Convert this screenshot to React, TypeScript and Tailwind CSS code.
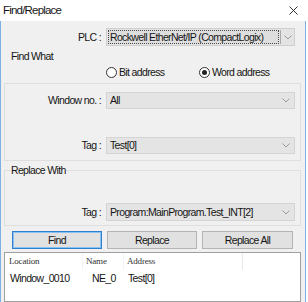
import React from "react";

function Chevron() {
  return (
    <svg width="8" height="5" viewBox="0 0 8 5" className="shrink-0">
      <polyline points="0.5,0.5 4,4 7.5,0.5" fill="none" stroke="#9a9a9a" strokeWidth="1" />
    </svg>
  );
}

function Combo({ text, focused = false, h = "h-[18px]" }: { text: string; focused?: boolean; h?: string }) {
  if (focused) {
    return (
      <div className={`flex items-center w-[189px] ${h} bg-[#e4e4e4] border border-[#cfcfcf]`}>
        <div className="ml-[1px] h-[14px] w-[171px] border border-dotted border-[#4a4a4a] bg-[#dedede] flex items-center pl-[1px] whitespace-nowrap overflow-hidden">
          {text}
        </div>
        <div className="ml-[1px] w-[1px] h-[14px] bg-[#a9a9a9]" />
        <div className="flex-1 flex items-center justify-center pl-[1px]">
          <Chevron />
        </div>
      </div>
    );
  }
  return (
    <div className={`flex items-center justify-between w-[189px] ${h} bg-[#e4e4e4] border border-[#d4d4d4] pl-[3px] pr-[4px]`}>
      <span className="whitespace-nowrap">{text}</span>
      <Chevron />
    </div>
  );
}

function Radio({ checked }: { checked?: boolean }) {
  return (
    <div className="w-[11px] h-[11px] rounded-full border border-[#333333] bg-white flex items-center justify-center shrink-0">
      {checked && <div className="w-[5px] h-[5px] rounded-full bg-[#222222]" />}
    </div>
  );
}

function Row({ label, children, cls = "" }: { label: string; children: React.ReactNode; cls?: string }) {
  return (
    <div className={`flex items-center ${cls}`}>
      <div className="w-[96px] text-right whitespace-nowrap">{label}</div>
      <div className="ml-[5px]">{children}</div>
    </div>
  );
}

export default function App() {
  return (
    <div className="w-[308px] h-[302px] overflow-hidden bg-white text-[10.5px] tracking-[-0.65px] text-[#151515] font-['Liberation_Sans',Arial,sans-serif] leading-none">
      {/* title bar */}
      <div className="h-[21px] flex items-center justify-between pl-[3px] pr-[10px]">
        <span className="text-[11.5px] tracking-[-0.8px]">Find/Replace</span>
        <svg width="9" height="9" viewBox="0 0 9 9">
          <line x1="0.5" y1="0.5" x2="8.5" y2="8.5" stroke="#333333" strokeWidth="1" />
          <line x1="8.5" y1="0.5" x2="0.5" y2="8.5" stroke="#333333" strokeWidth="1" />
        </svg>
      </div>

      {/* body */}
      <div className="w-[306px] h-[281px] bg-[#f0f0f0] border-l border-r border-[#7fb1e3] flex flex-col">
        {/* PLC */}
        <div className="mt-[7px] flex items-center h-[18px]">
          <div className="w-[100px] text-right">PLC :</div>
          <div className="ml-[5px]">
            <Combo text="Rockwell EtherNet/IP (CompactLogix)" focused />
          </div>
        </div>

        {/* Find What */}
        <div className="mt-[3px] h-[14px] flex items-center pl-[10px]">Find What</div>
        <div className="mt-[2px] h-[14px] flex items-center pl-[105px]">
          <div className="w-[93px] flex items-center">
            <Radio />
            <span className="ml-[2px]">Bit address</span>
          </div>
          <div className="flex items-center">
            <Radio checked />
            <span className="ml-[2px]">Word address</span>
          </div>
        </div>

        <div className="mt-[4px] ml-[3px] w-[297px] h-[78px] border border-[#dfdfdf] flex flex-col">
          <Row label="Window no. :" cls="mt-[8px]">
            <Combo text="All" h="h-[17px]" />
          </Row>
          <Row label="Tag :" cls="mt-[28px]">
            <Combo text="Test[0]" h="h-[17px]" />
          </Row>
        </div>

        {/* Replace With */}
        <fieldset className="mt-[2px] ml-[3px] w-[297px] border border-[#dfdfdf] pb-[4px]">
          <legend className="ml-[6px] h-[14px] leading-[14px] px-0">Replace With</legend>
          <Row label="Tag :" cls="mt-[26px]">
            <Combo text="Program:MainProgram.Test_INT[2]" />
          </Row>
        </fieldset>

        {/* buttons */}
        <div className="mt-[5px] ml-[11px] flex gap-[5px]">
          <div className="w-[90px] h-[18px] flex items-center justify-center bg-[#e1e1e1] border border-[#2f7fd0] shadow-[inset_0_0_0_1px_#8cc0ee]">
            Find
          </div>
          <div className="w-[90px] h-[18px] flex items-center justify-center bg-[#e1e1e1] border border-[#b4b4b4]">
            Replace
          </div>
          <div className="w-[91px] h-[18px] flex items-center justify-center bg-[#e1e1e1] border border-[#b4b4b4]">
            Replace All
          </div>
        </div>

        {/* list */}
        <div className="mt-[3px] ml-[3px] w-[297px] flex-1 bg-white border border-[#a0a0a0]">
          <div className="grid grid-cols-[78px_41px_119px_1fr] h-[17px] font-['Liberation_Serif',serif] text-[9px] tracking-[-0.2px] text-[#333333]">
            <div className="flex items-center pl-[4px] border-r border-[#f3f3f3]">Location</div>
            <div className="flex items-center pl-[3px] border-r border-[#f3f3f3]">Name</div>
            <div className="flex items-center pl-[3px] border-r border-[#e8e8e8]">Address</div>
            <div />
          </div>
          <div className="grid grid-cols-[78px_41px_119px_1fr] h-[16px]">
            <div className="flex items-center pl-[5px]">Window_0010</div>
            <div className="flex items-center pl-[9px]">NE_0</div>
            <div className="flex items-center pl-[4px]">Test[0]</div>
            <div />
          </div>
        </div>
      </div>
    </div>
  );
}
